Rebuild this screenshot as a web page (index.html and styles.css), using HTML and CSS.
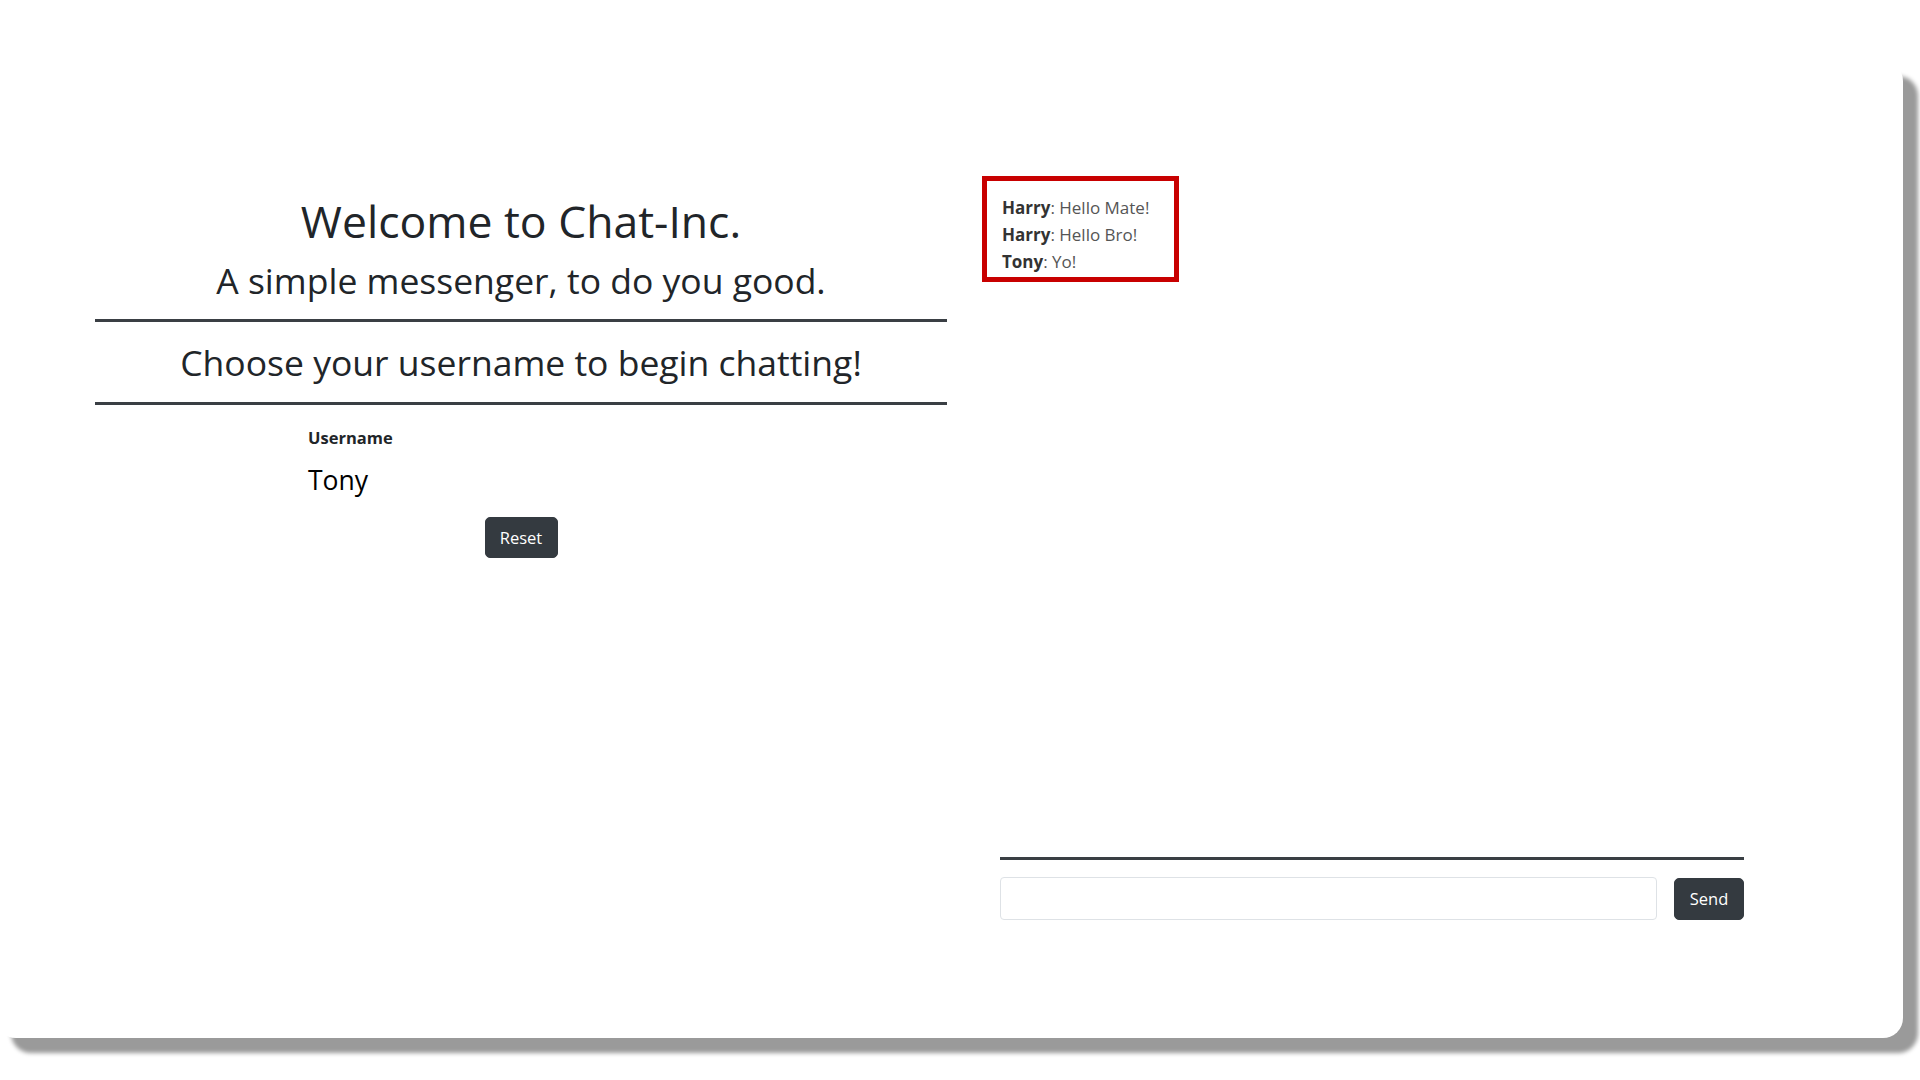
FILE: index.html
```html
<!DOCTYPE html>
<html lang="en">
<head>
<meta charset="utf-8">
<title>Chat-Inc</title>
<link rel="stylesheet" href="styles.css">
</head>
<body>
<div class="page">
  <div class="card">
    <section class="left">
      <h1 class="title">Welcome to Chat-Inc.</h1>
      <h3 class="subtitle">A simple messenger, to do you good.</h3>
      <hr class="rule">
      <h3 class="choose">Choose your username to begin chatting!</h3>
      <hr class="rule">
      <div class="form">
        <div class="label">Username</div>
        <div class="name">Tony</div>
        <div class="center"><button class="btn">Reset</button></div>
      </div>
    </section>
    <section class="right">
      <div class="messages">
        <div class="msg"><b>Harry</b>: Hello Mate!</div>
        <div class="msg"><b>Harry</b>: Hello Bro!</div>
        <div class="msg"><b>Tony</b>: Yo!</div>
      </div>
      <div class="composer">
        <hr class="rule">
        <div class="send-row">
          <input class="input" type="text">
          <button class="btn send">Send</button>
        </div>
      </div>
    </section>
  </div>
</div>
</body>
</html>
```

FILE: styles.css
```css
html, body {
  margin: 0;
  padding: 0;
  background: #ffffff;
  overflow: hidden;
  width: 1920px;
  height: 1080px;
}
body {
  font-family: "Open Sans", "Noto Sans", sans-serif;
  color: #212529;
}
.page {
  padding-top: 61px;
}
.card {
  margin-left: -4px;
  width: 1907px;
  height: 977px;
  box-sizing: border-box;
  background: #ffffff;
  border-radius: 20px;
  box-shadow: 15px 15px 4px #9a9a9a;
  display: flex;
  align-items: flex-start;
  padding-left: 99px;
}
.left {
  width: 852px;
  padding-top: 133px;
  text-align: center;
}
.title {
  margin: 0;
  font-size: 44.5px;
  font-weight: 500;
  line-height: 53px;
}
.subtitle, .choose {
  margin: 0;
  font-size: 35.5px;
  font-weight: 500;
  line-height: 42px;
}
.subtitle {
  margin-top: 12px;
}
.rule {
  margin: 0;
  border: 0;
  height: 3px;
  background: #3a3f44;
}
.left .rule:first-of-type {
  margin-top: 18px;
}
.choose {
  margin-top: 19px;
  margin-bottom: 19px;
}
.form {
  width: 426px;
  margin: 0 auto;
  text-align: left;
  padding-top: 20px;
}
.label {
  font-size: 16.5px;
  font-weight: 700;
  line-height: 25px;
  color: #212529;
}
.name {
  margin-top: 14.5px;
  font-size: 26.5px;
  font-weight: 500;
  line-height: 31px;
  color: #000000;
}
.center {
  text-align: center;
  margin-top: 21.5px;
}
.btn {
  font-family: "Open Sans", "Noto Sans", sans-serif;
  font-size: 16.5px;
  color: #ffffff;
  background: #343a40;
  border: 1px solid #343a40;
  border-radius: 5px;
  height: 41px;
  width: 73px;
  padding: 0;
}
.right {
  margin-left: 35px;
  width: 762px;
  height: 977px;
  box-sizing: border-box;
  padding-top: 115px;
  padding-bottom: 118px;
  display: flex;
  flex-direction: column;
}
.messages {
  width: 197px;
  box-sizing: border-box;
  border: 5px solid #c80000;
  padding: 13px 10px 2px 15px;
  font-size: 17px;
  line-height: 27px;
  color: #555555;
}
.msg b {
  color: #333333;
}
.composer {
  margin-top: auto;
  margin-left: 18px;
  width: 744px;
}
.send-row {
  display: flex;
  align-items: center;
  margin-top: 17px;
  gap: 17px;
}
.input {
  width: 657px;
  height: 43px;
  box-sizing: border-box;
  border: 1px solid #dee2e6;
  border-radius: 4px;
  margin: 0;
}
.send {
  width: 70px;
  height: 42px;
}
```
